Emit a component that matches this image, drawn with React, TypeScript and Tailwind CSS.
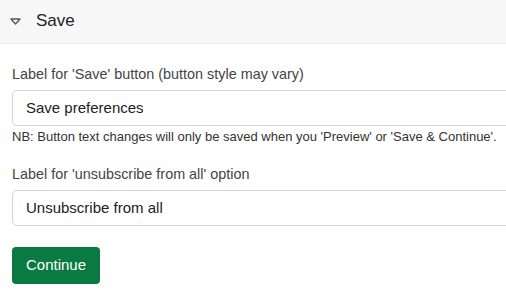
export default function App() {
  return (
    <div className="w-[506px] h-[291px] overflow-hidden bg-white font-['Liberation_Sans',Arial,sans-serif] text-[#333]">
      {/* Section header */}
      <div className="h-[44px] bg-[#f7f7f7] border-b border-[#ececec] flex items-center pl-[10px] gap-[15px]">
        <svg width="11" height="7" viewBox="0 0 11 7" className="mt-[-1px]">
          <path d="M1 1 L10 1 L5.5 6 Z" fill="none" stroke="#555" strokeWidth="1.3" strokeLinejoin="round" />
        </svg>
        <span className="text-[17px] text-[#222] mt-[-1px]">Save</span>
      </div>

      <div className="pl-[12px] pt-[20px]">
        <label className="block text-[14.4px] leading-[20px] text-[#444]">
          Label for 'Save' button (button style may vary)
        </label>
        <div className="mt-[6px] w-[520px] h-[36px] border border-[#d4d4d4] rounded-[5px] flex items-center pl-[13px] text-[15px] text-[#222]">
          Save preferences
        </div>
        <p className="mt-[3px] text-[13px] leading-[16px] text-[#333]">
          NB: Button text changes will only be saved when you 'Preview' or 'Save &amp; Continue'.
        </p>

        <label className="block mt-[19px] text-[14.4px] leading-[20px] text-[#444]">
          Label for 'unsubscribe from all' option
        </label>
        <div className="mt-[6px] w-[520px] h-[36px] border border-[#d4d4d4] rounded-[5px] flex items-center pl-[13px] text-[15px] text-[#222]">
          Unsubscribe from all
        </div>

        <button className="mt-[21px] w-[88px] h-[37px] rounded-[4px] bg-[#0a7a43] text-white text-[15px] flex items-center justify-center">
          Continue
        </button>
      </div>
    </div>
  );
}
